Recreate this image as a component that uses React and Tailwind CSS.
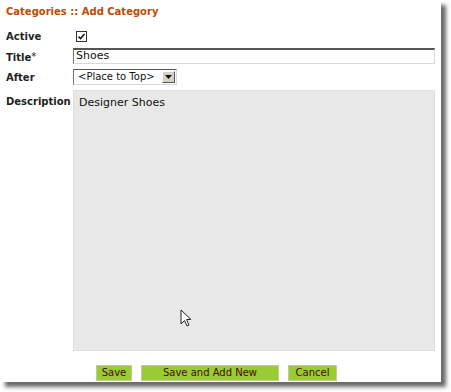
import React from "react";

const labelCls = "w-[67px] shrink-0 text-[10px] font-bold text-[#222] whitespace-nowrap";

const Cursor = () => (
  <svg
    className="absolute left-[180px] top-[309px]"
    width="13"
    height="19"
    viewBox="0 0 13 19"
  >
    <path
      d="M1 1 L1 15 L4.5 11.5 L7 17 L9 16 L6.5 10.5 L11 10.5 Z"
      fill="#fff"
      stroke="#222"
      strokeWidth="1"
      strokeLinejoin="round"
    />
  </svg>
);

const GreenButton = ({ children, width }) => (
  <button
    className={`${width} h-[16px] bg-[#99cc33] border border-[#c8c89a] text-[10px] leading-none text-[#4a0a0a]`}
  >
    {children}
  </button>
);

export default function App() {
  return (
    <div
      className="relative w-[451px] h-[392px] bg-white overflow-hidden"
      style={{ fontFamily: '"DejaVu Sans", Verdana, sans-serif' }}
    >
      <div className="w-[441px] h-[382px] bg-white shadow-[5px_5px_4px_#6a6a6a] flex flex-col pl-[6px]">
        <div className="pt-[5px] h-[20px] text-[10px] font-bold text-[#c04a00] leading-[14px]">
          Categories :: Add Category
        </div>

        <div className="flex items-center mt-[10px] h-[12px]">
          <span className={labelCls}>Active</span>
          <div className="ml-[3px] w-[11px] h-[11px] border border-[#333] bg-white flex items-center justify-center">
            <svg width="9" height="9" viewBox="0 0 9 9">
              <path d="M1.5 4.5 L3.5 6.5 L7.5 2" fill="none" stroke="#111" strokeWidth="1.6" />
            </svg>
          </div>
        </div>

        <div className="flex items-end mt-[6px] h-[16px]">
          <span className={`${labelCls} leading-[13px]`}>
            Title<sup className="text-[10px] font-normal relative -top-[1px]">*</sup>
          </span>
          <div className="w-[362px] h-[16px] border border-t-2 border-t-[#555] border-l-[#777] border-r-[#d8d8d8] border-b-[#d8d8d8] bg-white text-[11px] leading-[12px] pl-[2px] text-[#111]">
            Shoes
          </div>
        </div>

        <div className="flex items-center mt-[5px] h-[16px]">
          <span className={labelCls}>After</span>
          <div className="w-[104px] h-[16px] border border-t-[#555] border-l-[#777] border-r-[#d8d8d8] border-b-[#d8d8d8] bg-white flex items-center">
            <span className="flex-1 text-[10px] leading-[12px] pl-[4px] text-[#111] whitespace-nowrap">
              &lt;Place to Top&gt;
            </span>
            <div className="w-[13px] h-[12px] mr-[1px] bg-[#d4d0c8] border border-t-white border-l-white border-r-[#555] border-b-[#555] flex items-center justify-center">
              <svg width="7" height="4" viewBox="0 0 7 4">
                <path d="M0 0 L7 0 L3.5 4 Z" fill="#111" />
              </svg>
            </div>
          </div>
        </div>

        <div className="flex items-start mt-[5px]">
          <span className={`${labelCls} pt-[4px]`}>Description</span>
          <div className="w-[362px] h-[261px] bg-[#e8e8e8] border border-[#dedede] pt-[5px] pl-[5px] text-[11px] leading-[14px] text-[#111]">
            Designer Shoes
          </div>
        </div>

        <div className="flex mt-[14px] pl-[90px]">
          <GreenButton width="w-[36px]">Save</GreenButton>
          <div className="w-[9px]" />
          <GreenButton width="w-[138px]">Save and Add New</GreenButton>
          <div className="w-[9px]" />
          <GreenButton width="w-[49px]">Cancel</GreenButton>
        </div>
      </div>
      <Cursor />
    </div>
  );
}
